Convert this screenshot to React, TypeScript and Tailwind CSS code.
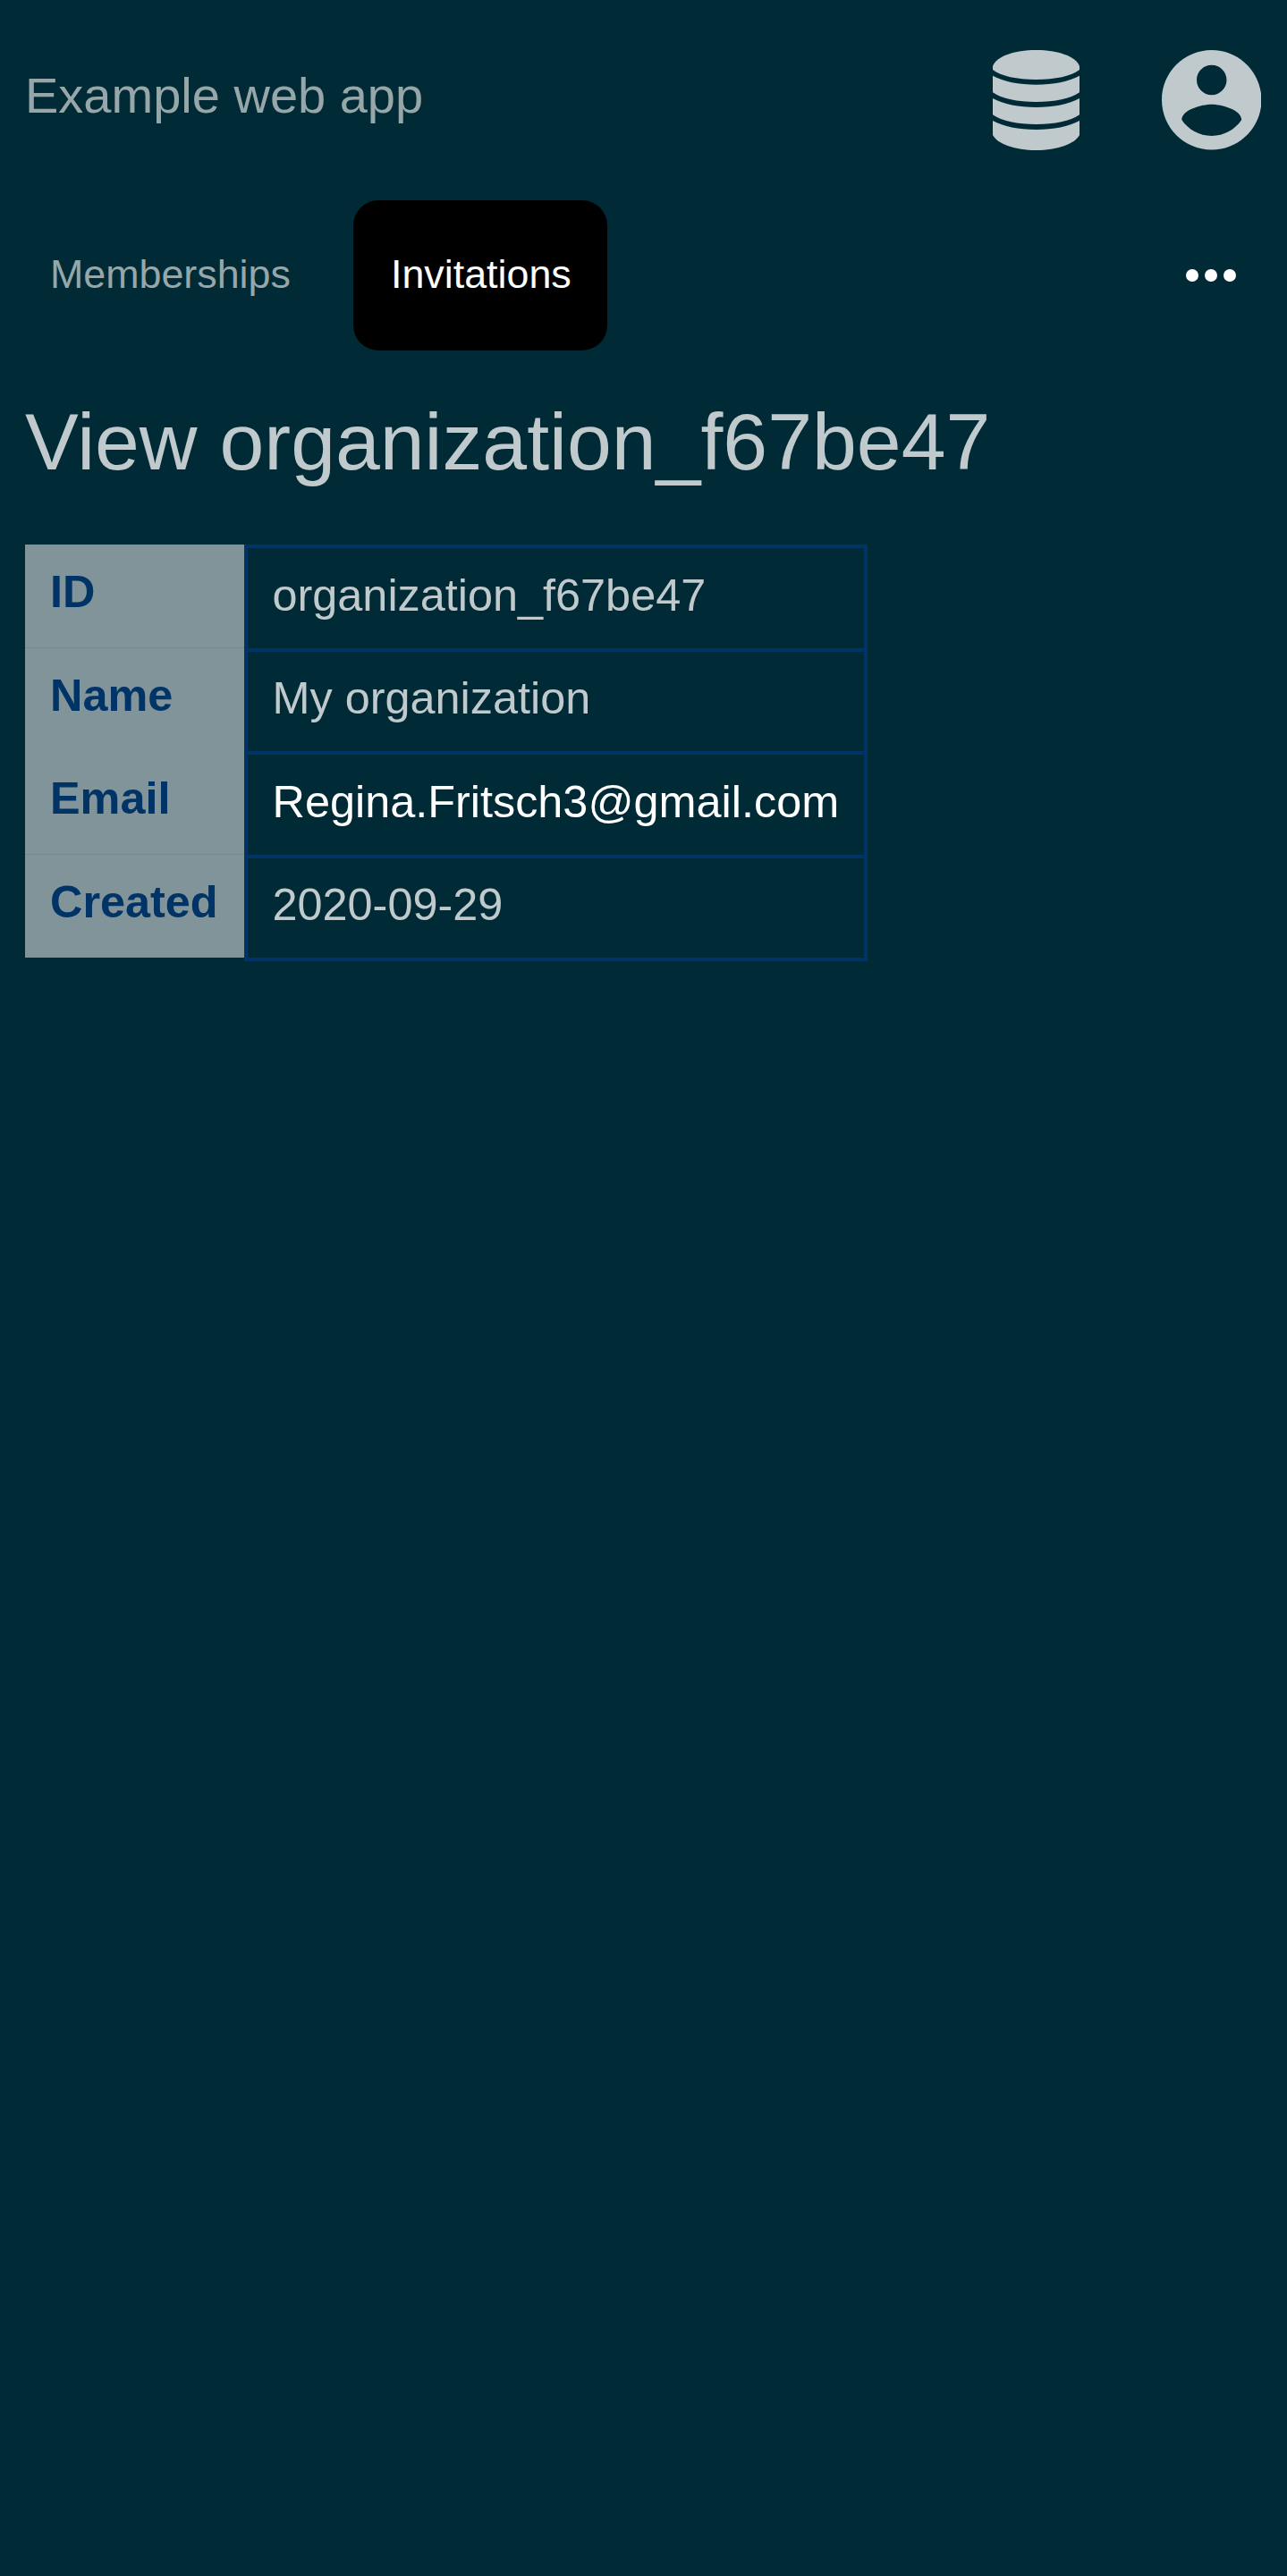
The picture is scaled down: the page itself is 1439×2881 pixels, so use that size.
const rows = [
  { label: "ID", value: "organization_f67be47", seam: true },
  { label: "Name", value: "My organization" },
  { label: "Email", value: "Regina.Fritsch3@gmail.com", link: true, seam: true },
  { label: "Created", value: "2020-09-29" },
];

function DatabaseIcon() {
  return (
    <svg viewBox="0 0 97 112" className="h-[112px] w-[97px]" fill="currentColor">
      <path d="M0 18C4 7 24 0 48.500 0S93 7 97 18v4c-9 7-27 11-48.500 11S9 29 0 22z" />
      <path d="M0 28.700c12 6.500 29 10 48.500 10s36.500-3.500 48.500-10v18.600c-10 7-28 10.700-48.500 10.700S10 54.300 0 47.300z" />
      <path d="M0 54c12 6.500 29 10 48.500 10s36.500-3.500 48.500-10v18.300c-10 7-28 10.700-48.500 10.700S10 79.300 0 72.300z" />
      <path d="M0 79c12 6.500 29 10 48.500 10s36.500-3.500 48.500-10v16c-5 10-25 17-48.500 17S5 105 0 95z" />
    </svg>
  );
}

function AccountIcon() {
  return (
    <svg viewBox="2 2 20 20" className="size-[111.5px]" fill="currentColor">
      <path d="M12 2C6.480 2 2 6.480 2 12s4.480 10 10 10 10-4.480 10-10S17.520 2 12 2zm0 3c1.660 0 3 1.340 3 3s-1.340 3-3 3-3-1.340-3-3 1.340-3 3-3zm0 14.200c-2.500 0-4.710-1.280-6-3.220.03-1.990 4-3.080 6-3.080 1.990 0 5.970 1.090 6 3.080-1.290 1.940-3.500 3.220-6 3.220z" />
    </svg>
  );
}

function MoreIcon() {
  return (
    <svg viewBox="0 0 56 14" className="mr-7 ml-auto h-[14px] w-14" fill="currentColor">
      <circle cx="7" cy="7" r="7" />
      <circle cx="28" cy="7" r="7" />
      <circle cx="49" cy="7" r="7" />
    </svg>
  );
}

export default function App() {
  return (
    <div className="min-h-screen bg-[#002b36] pr-[28.6px] pl-7 text-[#c0cacd] [font-family:'Liberation_Sans',Arial,sans-serif]">
      <header className="flex h-[224px] items-center justify-between">
        <div className="pb-[11px] text-[56px] leading-[64px] text-[#96a6a9]">Example web app</div>
        <div className="flex items-center gap-[92px]">
          <DatabaseIcon />
          <AccountIcon />
        </div>
      </header>
      <nav className="flex h-[168px] items-center text-[44.8px] leading-[51px] text-white">
        <a className="w-[325px] px-7 pb-[3px] text-[#96a6a9]">Memberships</a>
        <a className="ml-[42px] flex h-[168px] w-[283.5px] items-center rounded-[28px] bg-black pb-[3px] pl-[42px]">
          Invitations
        </a>
        <MoreIcon />
      </nav>
      <h1 className="mt-[42px] text-[89.6px] leading-[120px]">View organization_f67be47</h1>
      <div className="mt-[55px] flex text-[50.4px] leading-[58px]">
        <div className="w-[245px]">
          {rows.map((r) => (
            <div
              key={r.label}
              className={
                "h-[115.5px] bg-[#80949a] px-7 pt-6 font-bold text-[#003366] " +
                (r.seam ? "border-b border-[#73898f]" : "")
              }
            >
              {r.label}
            </div>
          ))}
        </div>
        <div className="w-[697px] border-x-[4px] border-b-[4px] border-[#003366]">
          {rows.map((r) => (
            <div
              key={r.label}
              className={
                "h-[115.5px] border-t-[4px] border-[#003366] pt-[23.7px] pl-[27.5px] whitespace-nowrap " +
                (r.link ? "text-white" : "")
              }
            >
              {r.value}
            </div>
          ))}
        </div>
      </div>
    </div>
  );
}
